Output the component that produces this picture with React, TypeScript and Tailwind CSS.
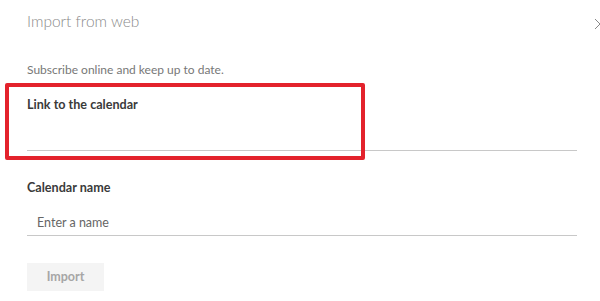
import React from "react";

export default function App() {
  return (
    <div className="relative w-[600px] h-[301px] overflow-hidden bg-white" style={{ fontFamily: 'Lato, "Open Sans", sans-serif' }}>
      <div className="flex flex-col pl-[27px] pr-[23px] pt-[10px]">
        <h1 className="h-[22px] text-[15.5px] font-light text-[#8a8a8a] leading-[22px]">Import from web</h1>
        <p className="mt-[30px] h-[16px] text-[12px] text-[#777] leading-[16px]">Subscribe online and keep up to date.</p>
        <label className="mt-[19px] h-[16px] text-[12.6px] font-bold text-[#3a3a3a] leading-[16px]">Link to the calendar</label>
        <div className="mt-[37px] h-[1px] bg-[#c8c8c8]" />
        <label className="mt-[29px] h-[16px] text-[12.6px] font-bold text-[#3a3a3a] leading-[16px]">Calendar name</label>
        <div className="mt-[14px] flex items-center pl-[10px] h-[26px] border-b border-[#c8c8c8]">
          <span className="text-[12.5px] text-[#666] leading-[16px]">Enter a name</span>
        </div>
        <div className="mt-[27px]">
          <button className="w-[77px] h-[28px] bg-[#f4f4f4] text-[12.5px] font-bold text-[#a6a6a6]">Import</button>
        </div>
      </div>
      <svg className="absolute left-[594px] top-[18px]" width="12" height="12" viewBox="0 0 12 12">
        <path d="M1 1 L11 11 M11 1 L1 11" stroke="#888" strokeWidth="1" fill="none" />
      </svg>
      <div className="absolute left-[5px] top-[83px] w-[360px] h-[77px] border-[4px] border-[#e3222c] rounded-[2px]" />
    </div>
  );
}
